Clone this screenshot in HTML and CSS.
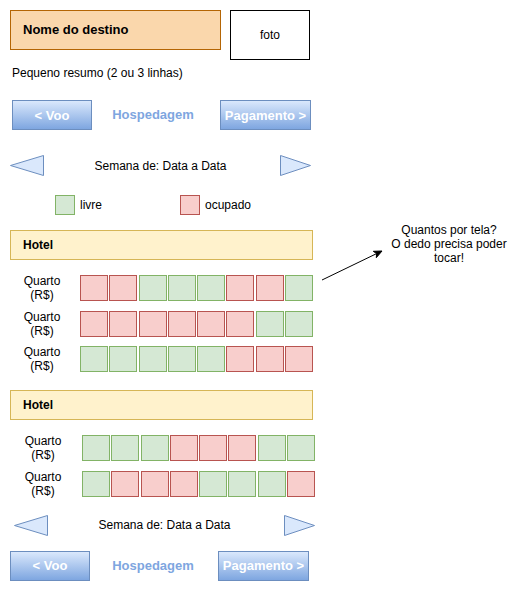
FILE: index.html
```html
<!DOCTYPE html>
<html lang="pt">
<head>
    <meta charset="UTF-8">
    <meta name="viewport" content="width=device-width, initial-scale=1.0">
    <title>Hospedagem</title>
    <link rel="stylesheet" href="styles.css">
</head>
<body>
    <div class="screen">
        <div class="header">
            <div class="title-box">Nome do destino</div>
            <div class="photo-box">foto</div>
        </div>

        <p class="summary">Pequeno resumo (2 ou 3 linhas)</p>

        <div class="steps">
            <button class="step-btn">&lt; Voo</button>
            <span class="step-current">Hospedagem</span>
            <button class="step-btn">Pagamento &gt;</button>
        </div>

        <div class="week">
            <svg class="tri" width="34" height="21" viewBox="0 0 34 21"><polygon points="33.5,0.5 33.5,20.5 0.5,10.5"/></svg>
            <span class="week-label">Semana de: Data a Data</span>
            <svg class="tri" width="31" height="21" viewBox="0 0 31 21"><polygon points="0.5,0.5 0.5,20.5 30.5,10.5"/></svg>
        </div>

        <div class="legend">
            <div class="legend-item"><span class="cell free"></span>livre</div>
            <div class="legend-item"><span class="cell busy"></span>ocupado</div>
        </div>

        <div class="hotel">Hotel</div>
        <div class="rooms">
            <div class="room">
                <div class="room-label">Quarto<br>(R$)</div>
                <div class="days">
                    <span class="cell busy"></span><span class="cell busy"></span><span class="cell free"></span><span class="cell free"></span>
                    <span class="cell free"></span><span class="cell busy"></span><span class="cell busy"></span><span class="cell free"></span>
                </div>
            </div>
            <div class="room">
                <div class="room-label">Quarto<br>(R$)</div>
                <div class="days">
                    <span class="cell busy"></span><span class="cell busy"></span><span class="cell busy"></span><span class="cell busy"></span>
                    <span class="cell busy"></span><span class="cell busy"></span><span class="cell free"></span><span class="cell free"></span>
                </div>
            </div>
            <div class="room">
                <div class="room-label">Quarto<br>(R$)</div>
                <div class="days">
                    <span class="cell free"></span><span class="cell free"></span><span class="cell free"></span><span class="cell free"></span>
                    <span class="cell free"></span><span class="cell busy"></span><span class="cell busy"></span><span class="cell busy"></span>
                </div>
            </div>
        </div>

        <div class="hotel hotel-second">Hotel</div>
        <div class="rooms rooms-second">
            <div class="room">
                <div class="room-label">Quarto<br>(R$)</div>
                <div class="days">
                    <span class="cell free"></span><span class="cell free"></span><span class="cell free"></span><span class="cell busy"></span>
                    <span class="cell busy"></span><span class="cell busy"></span><span class="cell free"></span><span class="cell free"></span>
                </div>
            </div>
            <div class="room">
                <div class="room-label">Quarto<br>(R$)</div>
                <div class="days">
                    <span class="cell free"></span><span class="cell busy"></span><span class="cell busy"></span><span class="cell busy"></span>
                    <span class="cell free"></span><span class="cell free"></span><span class="cell free"></span><span class="cell busy"></span>
                </div>
            </div>
        </div>

        <div class="week week-bottom">
            <svg class="tri" width="34" height="21" viewBox="0 0 34 21"><polygon points="33.5,0.5 33.5,20.5 0.5,10.5"/></svg>
            <span class="week-label">Semana de: Data a Data</span>
            <svg class="tri" width="31" height="21" viewBox="0 0 31 21"><polygon points="0.5,0.5 0.5,20.5 30.5,10.5"/></svg>
        </div>

        <div class="steps steps-bottom">
            <button class="step-btn">&lt; Voo</button>
            <span class="step-current">Hospedagem</span>
            <button class="step-btn">Pagamento &gt;</button>
        </div>
    </div>

    <!-- nota solta no canvas -->
    <svg class="note-arrow" width="70" height="44" viewBox="0 0 70 44">
        <line x1="4" y1="36" x2="58.6" y2="9.6"/>
        <polygon points="64,7 58.3,13.7 58.6,9.6 55.3,7.3"/>
    </svg>
    <p class="note">Quantos por tela?<br>O dedo precisa poder tocar!</p>
</body>
</html>
```

FILE: styles.css
```css
body {
    margin: 0;
    width: 531px;
    height: 591px;
    position: relative;
    background: #fff;
    color: #000;
    font-family: "Liberation Sans", Helvetica, Arial, sans-serif;
    font-size: 12px;
    line-height: 14px;
}

.screen {
    padding-top: 10px;
}

.header {
    display: flex;
    gap: 9px;
    margin-left: 10px;
}

.title-box {
    box-sizing: border-box;
    width: 211px;
    height: 40px;
    padding-left: 12px;
    display: flex;
    align-items: center;
    background-color: #fad7ac;
    border: 1px solid #b46504;
    font-size: 13px;
    font-weight: bold;
}

.photo-box {
    box-sizing: border-box;
    width: 80px;
    height: 50px;
    display: flex;
    justify-content: center;
    align-items: center;
    border: 1px solid #000;
}

.summary {
    margin: 6px 0 0 12px;
}

.steps {
    display: grid;
    grid-template-columns: 80px 1fr 91px;
    align-items: center;
    width: 299px;
    height: 30px;
    margin: 20px 0 0 12px;
}

.step-btn {
    box-sizing: border-box;
    height: 30px;
    padding: 0;
    border: 1px solid #6c8ebf;
    background: linear-gradient(to bottom, #dae8fc, #7ea6e0);
    color: #fff;
    font-family: inherit;
    font-size: 13px;
    font-weight: bold;
}

.step-current {
    text-align: center;
    padding-right: 6px;
    color: #7ea6e0;
    font-size: 13px;
    font-weight: bold;
}

.steps-bottom {
    margin: 15px 0 0 10px;
}

.steps-bottom .step-current {
    padding-right: 2px;
}

.week {
    display: grid;
    grid-template-columns: 34px 1fr 31px;
    align-items: center;
    width: 301px;
    height: 21px;
    margin: 25px 0 0 10px;
}

.week-label {
    text-align: center;
    padding-right: 3px;
}

.week-bottom {
    margin: 18px 0 0 14px;
}

.tri {
    display: block;
}

.tri polygon {
    fill: #dae8fc;
    stroke: #6c8ebf;
    stroke-width: 1;
}

.legend {
    display: flex;
    margin: 19px 0 0 55px;
}

.legend-item {
    display: flex;
    align-items: center;
    gap: 5px;
    width: 125px;
}

.legend .cell {
    width: 20px;
    height: 20px;
}

.hotel {
    box-sizing: border-box;
    width: 303px;
    height: 30px;
    margin: 15px 0 0 10px;
    padding-left: 12px;
    display: flex;
    align-items: center;
    background-color: #fff2cc;
    border: 1px solid #d6b656;
    font-weight: bold;
}

.hotel-second {
    margin-top: 18px;
}

.rooms {
    display: flex;
    flex-direction: column;
    gap: 9.5px;
    margin: 15px 0 0 10px;
}

.room {
    display: flex;
    align-items: center;
    gap: 6px;
    height: 26px;
}

.room-label {
    width: 64px;
    text-align: center;
}

.rooms-second .room-label {
    width: 66px;
}

.days {
    display: flex;
    gap: 1.3px;
}

.cell {
    box-sizing: border-box;
    display: block;
    width: 28px;
    height: 26px;
    border: 1px solid;
}

.cell.free {
    background-color: #d5e8d4;
    border-color: #82b366;
}

.cell.busy {
    background-color: #f8cecc;
    border-color: #b85450;
}

.note {
    position: absolute;
    left: 389px;
    top: 223px;
    width: 120px;
    margin: 0;
    text-align: center;
}

.note-arrow {
    position: absolute;
    left: 318px;
    top: 244px;
}

.note-arrow line {
    stroke: #000;
    stroke-width: 1;
}

.note-arrow polygon {
    fill: #000;
    stroke: #000;
    stroke-width: 1;
}
```
